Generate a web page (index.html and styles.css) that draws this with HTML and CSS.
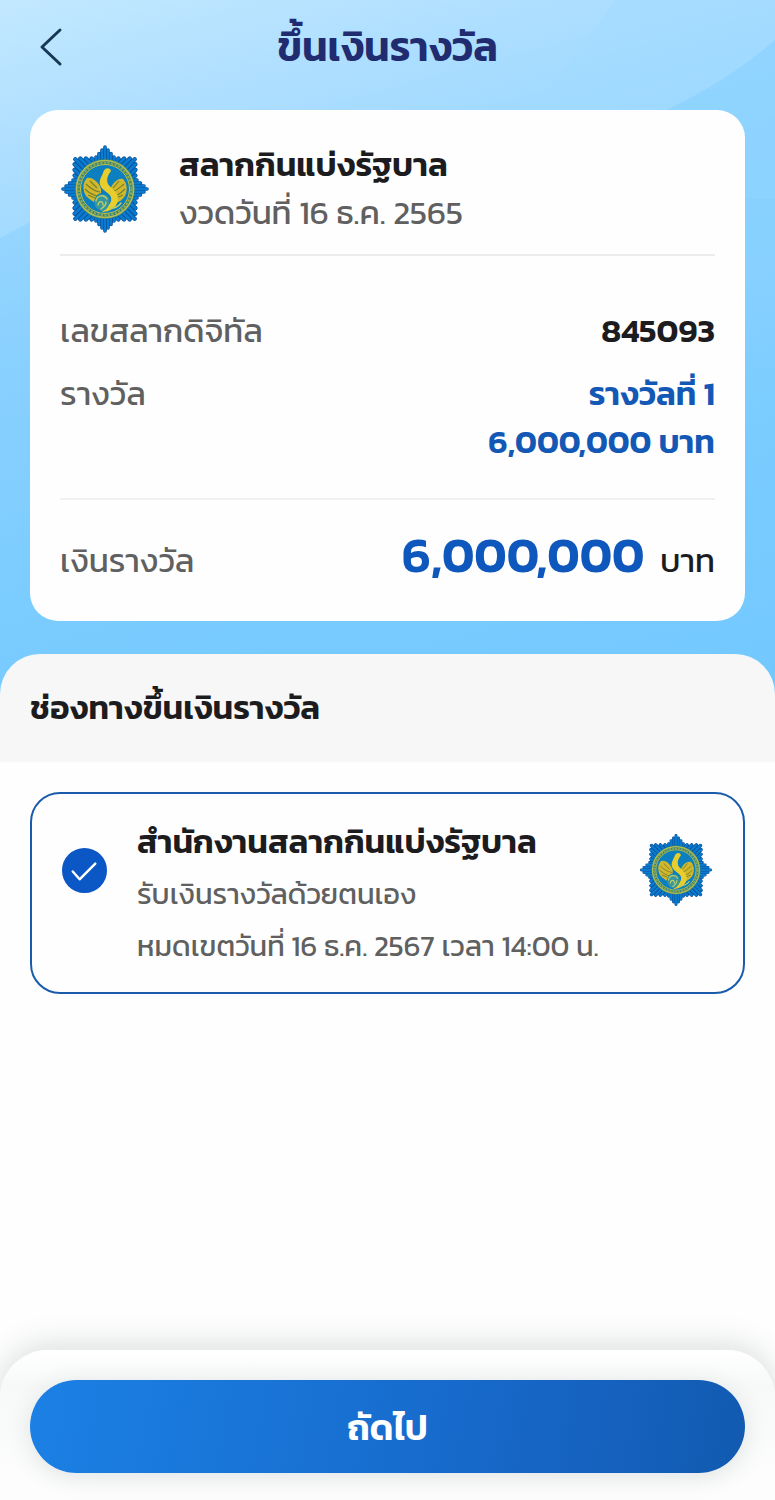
FILE: index.html
```
<!DOCTYPE html>
<html lang="th">
<head>
<meta charset="utf-8">
<meta name="viewport" content="width=device-width, initial-scale=1">
<title>ขึ้นเงินรางวัล</title>
<link rel="stylesheet" href="styles.css">
</head>
<body>
<svg class="defs" aria-hidden="true">
  <defs>
    <g id="rays">
      <path d="M-16 0V-27M16 0V-27M-12 0V-31M12 0V-31M-8 0V-35M8 0V-35M-4 0V-39M4 0V-39M0 0V-42" fill="none" stroke="#0b4f96" stroke-width="4.4" stroke-linecap="round"/>
      <path d="M-16 0V-27M16 0V-27M-12 0V-31M12 0V-31M-8 0V-35M8 0V-35M-4 0V-39M4 0V-39M0 0V-42" fill="none" stroke="#087bd0" stroke-width="3" stroke-linecap="round"/>
    </g>
    <g id="rays-narrow">
      <path d="M-9 0V-32M9 0V-32M-6 0V-35.5M6 0V-35.5M-3 0V-39M3 0V-39M0 0V-42" fill="none" stroke="#0b4f96" stroke-width="3.6" stroke-linecap="round"/>
      <path d="M-9 0V-32M9 0V-32M-6 0V-35.5M6 0V-35.5M-3 0V-39M3 0V-39M0 0V-42" fill="none" stroke="#087bd0" stroke-width="2.3" stroke-linecap="round"/>
    </g>
    <symbol id="emblem" viewBox="-45 -45 90 90">
      <use href="#rays" transform="rotate(45)"/>
      <use href="#rays" transform="rotate(135)"/>
      <use href="#rays" transform="rotate(225)"/>
      <use href="#rays" transform="rotate(315)"/>
      <use href="#rays-narrow"/>
      <use href="#rays-narrow" transform="rotate(90)"/>
      <use href="#rays-narrow" transform="rotate(180)"/>
      <use href="#rays-narrow" transform="rotate(270)"/>
      <circle r="30" fill="#2f7f80"/>
      <circle r="28.5" fill="none" stroke="#b3bd54" stroke-width="1.6"/>
      <circle r="26.4" fill="none" stroke="#8da94f" stroke-width="2.2" stroke-dasharray="2.4 1.2"/>
      <circle r="24.5" fill="#0b7fc0" stroke="#c3c545" stroke-width="1"/>
      <path d="M-4 0C-7-8-13-12-18-11C-22-7-23 0-19 7C-16 10-13 12-11 13C-10 8-8 5-4 4ZM5 1C8-7 13-11 18-10C22-6 23 1 20 7C17 11 14 13 11 14C12 9 10 6 6 4Z" fill="#d1b72b"/>
      <path d="M-19-5C-15-1-11 2-5 3M-20 0C-16 4-12 6-8 7M-17 6L-10 9M-15-8L-8-1M19-5C14-1 11 2 7 3M20 0C16 4 13 6 10 7M18 6L11 9M14-8L8-1" fill="none" stroke="#75822c" stroke-width="1.1"/>
      <path d="M5-20C2-22-1-20-2-16C-4-11-7-8-4-2C-1 3 8 5 6 12C4 18-1 20-3 23C4 23 12 19 13 11C14 3 6 0 3-5C1-10 3-14 6-18Z" fill="#e7ce2d"/>
      <path d="M-9 9C-6 4 1 4 4 9C6 15 2 22-3 22C-9 21-13 14-9 9Z" fill="#3796a1"/>
      <path d="M-9 12C-8 6-1 5 2 10M-7 16C-6 11-2 12-2 16M-4 20C-1 18 1 16 1 13M5 19C9 20 14 17 16 14" fill="none" stroke="#b8cf62" stroke-width="1.4" stroke-linecap="round"/>
    </symbol>
  </defs>
</svg>

<main class="page">
  <section class="hero">
    <svg class="hero-art" viewBox="0 0 775 700" preserveAspectRatio="none" aria-hidden="true">
      <path d="M615 0Q565 85 440 200H775V0Z" fill="#a2dbff" opacity=".55"/>
      <path d="M775 40Q700 110 520 170V260H775Z" fill="#85d1ff" opacity=".6"/>
      <path d="M0 240Q70 205 130 160V700H0Z" fill="#7bccff" opacity=".35"/>
    </svg>
    <header class="topbar">
      <button class="back" type="button" aria-label="ย้อนกลับ">
        <svg viewBox="0 0 24 40" aria-hidden="true"><path d="M21 3L3 20L21 37"/></svg>
      </button>
      <h1>ขึ้นเงินรางวัล</h1>
    </header>

    <article class="ticket">
      <div class="ticket-head">
        <svg class="emblem" aria-hidden="true"><use href="#emblem"/></svg>
        <div>
          <h2>สลากกินแบ่งรัฐบาล</h2>
          <p>งวดวันที่ 16 ธ.ค. 2565</p>
        </div>
      </div>
      <dl class="details">
        <div class="row"><dt>เลขสลากดิจิทัล</dt><dd>845093</dd></div>
        <div class="row"><dt>รางวัล</dt><dd class="prize">รางวัลที่ 1<br>6,000,000 บาท</dd></div>
      </dl>
      <dl class="total">
        <dt>เงินรางวัล</dt>
        <dd><strong>6,000,000</strong> <span>บาท</span></dd>
      </dl>
    </article>
  </section>

  <section class="channel">
    <h2 class="channel-title">ช่องทางขึ้นเงินรางวัล</h2>
    <label class="option" for="office">
      <span class="tick">
        <input type="radio" id="office" name="channel" checked>
        <svg viewBox="0 0 46 46" aria-hidden="true"><path d="M11 24L18 32L34 16"/></svg>
      </span>
      <span class="option-text">
        <b>สำนักงานสลากกินแบ่งรัฐบาล</b>
        <span>รับเงินรางวัลด้วยตนเอง</span>
        <span>หมดเขตวันที่ 16 ธ.ค. 2567 เวลา 14:00 น.</span>
      </span>
      <svg class="emblem emblem-small" aria-hidden="true"><use href="#emblem"/></svg>
    </label>
  </section>

  <footer class="actions">
    <button class="next" type="button">ถัดไป</button>
  </footer>
</main>
</body>
</html>
```
FILE: styles.css
```
* { box-sizing: border-box; }
body {
  margin: 0;
  background: #fefefe;
  color: #1c1c1e;
  font-family: Kanit, Prompt, "Noto Sans Thai", Inter, "Noto Sans", sans-serif;
}
h1, h2, p, dl, dd { margin: 0; }
button { border: 0; padding: 0; background: none; font: inherit; cursor: pointer; }
.defs { position: absolute; width: 0; height: 0; }
.page { display: flex; flex-direction: column; min-height: 100vh; }

.hero {
  position: relative;
  padding: 0 30px 73px;
  background: linear-gradient(165deg, #c2e8ff 0%, #addeff 18%, #8fd3ff 42%, #7accff 70%, #72c8fe 100%);
}
.hero-art { position: absolute; inset: 0; width: 100%; height: 100%; }
.topbar {
  position: relative;
  display: grid;
  grid-template-columns: 44px 1fr 44px;
  align-items: center;
  height: 110px;
  padding-bottom: 16px;
}
.back { width: 44px; height: 44px; }
.back svg { display: block; width: 24px; height: 40px; margin-left: 9px; }
.back path { fill: none; stroke: #173852; stroke-width: 3; stroke-linecap: round; stroke-linejoin: round; }
h1 { text-align: center; font-size: 41px; line-height: 56px; font-weight: 600; color: #202b70; }

.ticket { position: relative; padding: 30px 30px 27px; border-radius: 28px; background: #fefefe; }
.ticket-head {
  display: flex;
  align-items: center;
  gap: 29px;
  height: 116px;
  padding-bottom: 16px;
  border-bottom: 2px solid #ececec;
}
.emblem { flex: none; width: 90px; height: 90px; }
.ticket-head h2 { font-size: 33px; line-height: 48px; font-weight: 600; }
.ticket-head p { font-size: 33px; line-height: 48px; color: #606060; }
.details { padding: 51px 0 32px; border-bottom: 2px solid #f1f1f1; }
.row { display: flex; justify-content: space-between; font-size: 33px; line-height: 48px; }
.row + .row { margin-top: 15px; }
dt { color: #606060; }
.row dd { font-weight: 600; text-align: right; }
.row .prize { color: #1458b5; }
.total {
  display: flex;
  justify-content: space-between;
  align-items: baseline;
  padding-top: 22px;
  font-size: 33px;
  line-height: 66px;
}
.total strong { margin-right: 8px; font-size: 49px; font-weight: 600; color: #0d57bd; }

.channel { position: relative; margin-top: -40px; flex: 1; }
.channel-title {
  padding: 30px;
  border-radius: 40px 40px 0 0;
  background: #f7f7f7;
  font-size: 33px;
  line-height: 48px;
  font-weight: 600;
}
.option {
  display: flex;
  align-items: center;
  gap: 30px;
  margin: 30px;
  min-height: 200px;
  padding: 22px 30px 20px;
  border: 2px solid #1a5cab;
  border-radius: 30px;
  cursor: pointer;
}
.tick { display: grid; flex: none; width: 45px; height: 45px; margin-bottom: 48px; }
.tick > * { grid-area: 1 / 1; width: 100%; height: 100%; margin: 0; }
.tick input { appearance: none; border: 2px solid #0b57c5; border-radius: 50%; }
.tick input:checked { background: #0b57c5; }
.tick svg { z-index: 1; pointer-events: none; }
.tick path { fill: none; stroke: #fff; stroke-width: 2.5; stroke-linecap: round; stroke-linejoin: round; }
.option-text { display: flex; flex: 1; flex-direction: column; font-size: 29px; line-height: 52px; color: #606060; }
.option-text b { font-size: 33px; font-weight: 600; color: #1c1c1e; }
.option .emblem-small { width: 74px; height: 74px; margin-bottom: 48px; }

.actions {
  position: sticky;
  bottom: 0;
  padding: 30px 30px 27px;
  border-radius: 48px 48px 0 0;
  background: linear-gradient(#fff, #f7f8f8 24%, #fdfdfd 90%);
  box-shadow: 0 -4px 34px #d8dddb;
}
.next {
  display: block;
  width: 100%;
  height: 93px;
  border-radius: 47px;
  background: linear-gradient(100deg, #1c80e4, #1872d4 40%, #1665c5 70%, #125ab0);
  box-shadow: 0 4px 24px #dfe3e3;
  color: #fff;
  font-size: 36px;
  font-weight: 600;
}
```
